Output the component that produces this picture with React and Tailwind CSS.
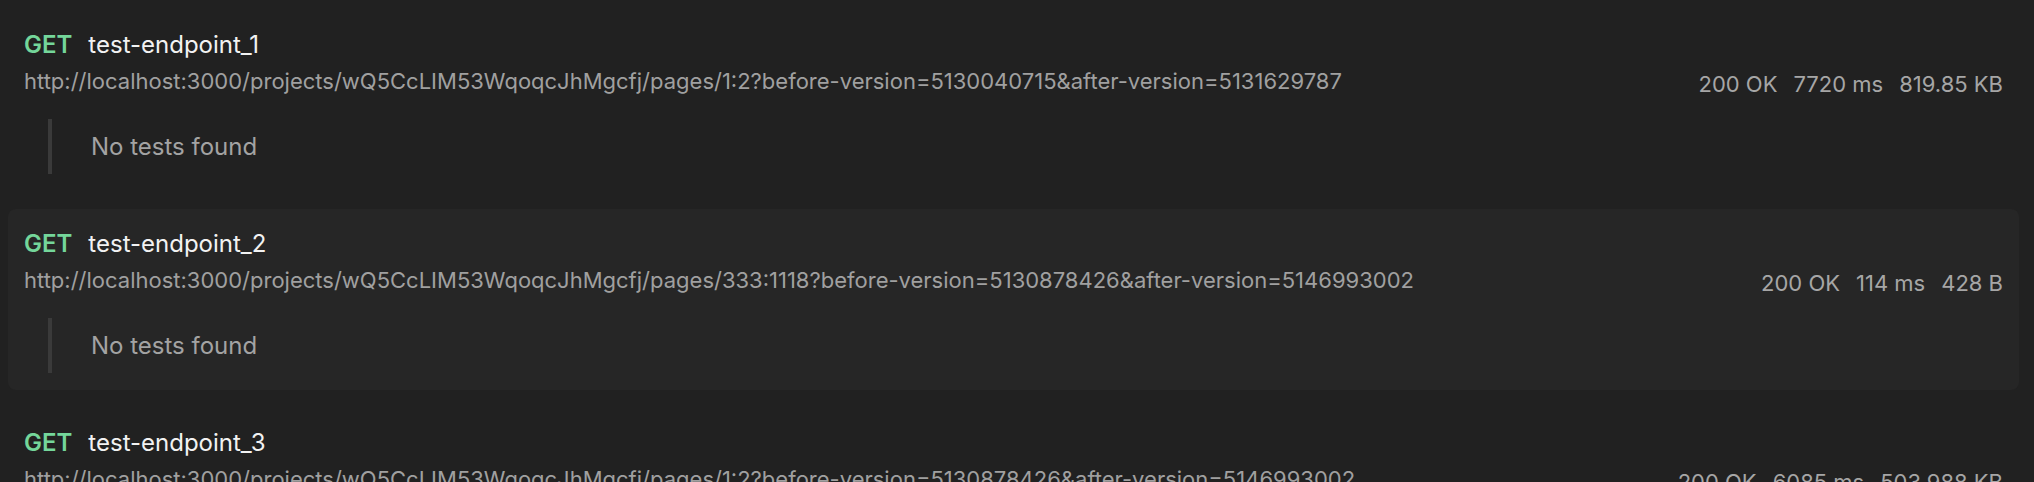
import React from 'react';

const RESULTS = [
    {
        name: 'test-endpoint_1',
        url: 'http://localhost:3000/projects/wQ5CcLIM53WqoqcJhMgcfj/pages/1:2?before-version=5130040715&after-version=5131629787',
        status: '200 OK',
        time: '7720 ms',
        size: '819.85 KB',
    },
    {
        name: 'test-endpoint_2',
        url: 'http://localhost:3000/projects/wQ5CcLIM53WqoqcJhMgcfj/pages/333:1118?before-version=5130878426&after-version=5146993002',
        status: '200 OK',
        time: '114 ms',
        size: '428 B',
    },
    {
        name: 'test-endpoint_3',
        url: 'http://localhost:3000/projects/wQ5CcLIM53WqoqcJhMgcfj/pages/1:2?before-version=5130878426&after-version=5146993002',
        status: '200 OK',
        time: '6085 ms',
        size: '503.988 KB',
    },
];

const ResultRow = ({ item, striped }) => (
    <div className={striped ? 'rounded-lg bg-[#262626] px-4 pt-[18px] pb-[17px]' : 'rounded-lg px-4 pt-[18px] pb-[17px]'}>
        <div className="flex items-center gap-[16px] text-[24px] leading-[33px]">
            <span className="font-semibold text-[#74d69a]">GET</span>
            <span className="text-[#f2f2f2]">{item.name}</span>
        </div>
        <div className="mt-1 flex h-[33px] items-start justify-between text-[22px] leading-[33px] text-[#a0a0a0]">
            <span>{item.url}</span>
            <div className="flex gap-4 pt-[3px] text-[#a6a6a6]">
                <span>{item.status}</span>
                <span>{item.time}</span>
                <span>{item.size}</span>
            </div>
        </div>
        <div className="mt-[21px] ml-6 border-l-4 border-[#3a3a3a] py-[11px] pl-[39px] text-[24px] leading-[33px] text-[#a3a3a3]">
            No tests found
        </div>
    </div>
);

export default function App() {
    return (
        <div
            className="min-h-screen w-full bg-[#212121] pl-2 pr-[15px] pt-[10px] flex flex-col gap-[18px]"
            style={{ fontFamily: 'Inter, "Noto Sans", sans-serif' }}
        >
            {RESULTS.map((item, i) => (
                <ResultRow key={item.name} item={item} striped={i % 2 === 1} />
            ))}
        </div>
    );
}
